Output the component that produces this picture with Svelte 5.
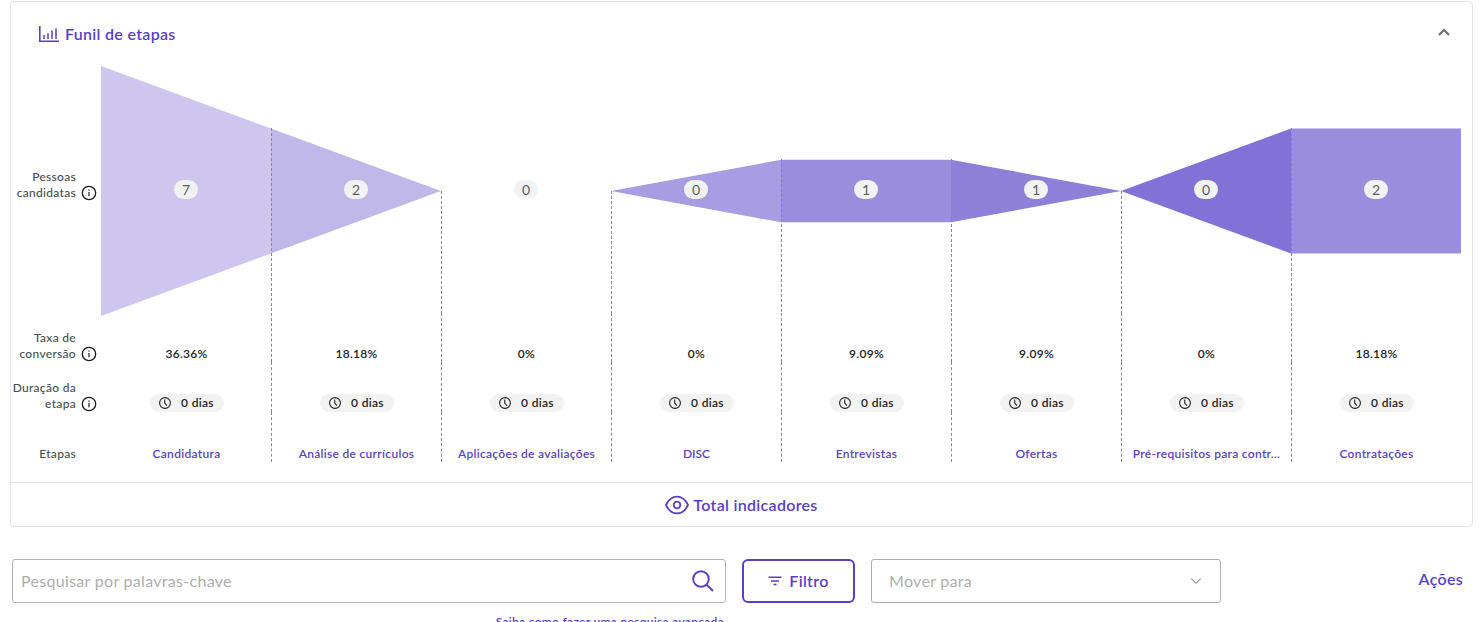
<script>
  const stages = [
    { name: 'Candidatura', people: 7, rate: '36.36%', from: 250, to: 125, color: '#cec6ef', ls: 0.3 },
    { name: 'Análise de currículos', people: 2, rate: '18.18%', from: 125, to: 0, color: '#c1b8ea', ls: 0.3 },
    { name: 'Aplicações de avaliações', people: 0, rate: '0%', from: 0, to: 0, color: '#b5aae6', ls: 0.3 },
    { name: 'DISC', people: 0, rate: '0%', from: 0, to: 62.5, color: '#a89ce2', ls: 0 },
    { name: 'Entrevistas', people: 1, rate: '9.09%', from: 62.5, to: 62.5, color: '#9b8ddd', ls: 0.3 },
    { name: 'Ofertas', people: 1, rate: '9.09%', from: 62.5, to: 0, color: '#8e7fd8', ls: 0.3 },
    { name: 'Pré-requisitos para contr...', people: 0, rate: '0%', from: 0, to: 125, color: '#8271d6', ls: 0.3 },
    { name: 'Contratações', people: 2, rate: '18.18%', from: 125, to: 125, color: '#9b8ddd', ls: 0.3 }
  ];
  const W = 170;
  const MID = 125;
  const shape = (s, i) =>
    `${i * W},${MID - s.from / 2} ${(i + 1) * W},${MID - s.to / 2} ${(i + 1) * W},${MID + s.to / 2} ${i * W},${MID + s.from / 2}`;
</script>

{#snippet info()}
  <svg class="info" width="16" height="16" viewBox="0 0 16 16" fill="none" stroke="#1c1c1c">
    <circle cx="8" cy="8" r="6.7" stroke-width="1.3" />
    <path d="M8 7v4.2M8 4.6v1.2" stroke-width="1.2" />
  </svg>
{/snippet}

<main>
  <section class="card">
    <header>
      <svg width="20" height="17" viewBox="0 0 20 17" fill="none" stroke="#5a3fc6">
        <path d="M.8 0v15.2H20" stroke-width="1.6" />
        <path d="M5 9v4M9 7.2V13M13 4.5V13M17 2.3V13" stroke-width="1.5" />
      </svg>
      <h2>Funil de etapas</h2>
      <svg class="chev" width="12" height="8" viewBox="0 0 12 8" fill="none" stroke="#6c6c6c" stroke-width="2">
        <path d="M1 7l5-5 5 5" />
      </svg>
    </header>

    <div class="chart">
      <div class="label first"><span>Pessoas<br />candidatas</span>{@render info()}</div>
      <div class="funnel">
        <svg width="1360" height="250" viewBox="0 0 1360 250">
          {#each stages as s, i}
            <polygon points={shape(s, i)} fill={s.color} />
          {/each}
          {#each stages as s, i}
            {#if i > 0}
              <path d="M{i * W + 0.5} {Math.floor(MID - s.from / 2)}V247" stroke="#8a8a8a" stroke-dasharray="3 2" />
            {/if}
          {/each}
        </svg>
        <div class="counts">
          {#each stages as s}
            <div><b>{s.people}</b></div>
          {/each}
        </div>
      </div>
    </div>

    <div class="row r1">
      <div class="label"><span>Taxa de<br />conversão</span>{@render info()}</div>
      {#each stages as s}
        <div class="cell rate">{s.rate}</div>
      {/each}
    </div>
    <div class="row">
      <div class="label"><span>Duração da<br />etapa</span>{@render info()}</div>
      {#each stages as s}
        <div class="cell">
          <div class="days">
            <svg width="12" height="12" viewBox="0 0 12 12" fill="none" stroke="#222" stroke-width="1.1">
              <circle cx="6" cy="6" r="5.4" />
              <path d="M5.7 2.6v3.5l2.2 2.5" />
            </svg>
            <span>0 dias</span>
          </div>
        </div>
      {/each}
    </div>
    <div class="row">
      <div class="label solo"><span>Etapas</span></div>
      {#each stages as s}
        <div class="cell name" style="letter-spacing:{s.ls}px">{s.name}</div>
      {/each}
    </div>

    <footer>
      <svg width="24" height="20" viewBox="0 0 24 20" fill="none" stroke="#5a3fc6" stroke-width="1.8">
        <path d="M1 10C3.6 4.6 7.4 1.6 12 1.6S20.400 4.600 23 10C20.400 15.400 16.600 18.400 12 18.400S3.600 15.400 1 10z" />
        <circle cx="12" cy="10" r="3.3" />
      </svg>
      <span>Total indicadores</span>
    </footer>
  </section>

  <section class="tools">
    <div class="search-col">
      <div class="search">
        <span>Pesquisar por palavras-chave</span>
        <svg width="22" height="22" viewBox="0 0 22 22" fill="none" stroke="#5a3fc6" stroke-width="1.9">
          <circle cx="9" cy="9" r="7.8" />
          <path d="M14.500 14.500L21 21" />
        </svg>
      </div>
      <div class="hint">Saiba como fazer uma pesquisa avançada</div>
    </div>
    <div class="filter">
      <svg width="14" height="10" viewBox="0 0 14 10" fill="none" stroke="#5a3fc6" stroke-width="1.5">
        <path d="M.5 1.200h13M3 5h8M5.500 8.600h3" />
      </svg>
      <span>Filtro</span>
    </div>
    <div class="move">
      <span>Mover para</span>
      <svg width="12" height="8" viewBox="0 0 12 8" fill="none" stroke="#a3a6a5" stroke-width="1.300">
        <path d="M1.300 1.500L6 6.200l4.700-4.700" />
      </svg>
    </div>
    <div class="actions">Ações</div>
  </section>
</main>

<style>
  :global(body) { background: #fff; overflow: hidden; }
  main {
    box-sizing: border-box;
    width: 1481px;
    height: 622px;
    overflow: hidden;
    padding: 1px 8px 0 10px;
    font-family: Lato, sans-serif;
    font-size: 12px;
    line-height: 16px;
    letter-spacing: 0.3px;
    color: #222;
  }
  .card { box-sizing: border-box; height: 526px; border: 1px solid #e4e4e4; border-radius: 4px; }
  header { display: flex; align-items: center; height: 64px; padding: 0 22px 0 28px; box-sizing: border-box; }
  header svg:first-child { margin-bottom: -1px; }
  h2 { margin: 0 0 0 6px; font-size: 16px; line-height: 22px; font-weight: 600; color: #5a3fc6; letter-spacing: 0.3px; }
  .chev { margin: 0 0 4px auto; }
  .chart { display: flex; height: 247px; }
  .label {
    box-sizing: border-box;
    width: 90px;
    flex: none;
    display: flex;
    justify-content: flex-end;
    align-items: flex-end;
    gap: 5px;
    padding-right: 4px;
    text-align: right;
    font-weight: 500;
    color: #44514f;
    white-space: nowrap;
  }
  .label.first { align-items: flex-start; padding-top: 103px; }
  .label.first .info { margin-top: 16px; }
  .label.solo { padding-right: 25px; }
  .info { flex: none; }
  .funnel { display: grid; width: 1360px; height: 250px; }
  .funnel > * { grid-area: 1 / 1; }
  .counts { display: grid; grid-template-columns: repeat(8, 170px); align-items: center; justify-items: center; margin-top: -2px; height: 250px; }
  b {
    display: block;
    width: 24px;
    height: 19px;
    border-radius: 10px;
    background: #f2f2f2;
    color: #566266;
    font-weight: 400;
    font-size: 14px;
    line-height: 19px;
    letter-spacing: 0;
    text-align: center;
  }
  .row { display: flex; height: 50px; }
  .r1 { height: 49px; }
  .cell {
    box-sizing: border-box;
    width: 170px;
    display: flex;
    align-items: flex-end;
    justify-content: center;
    border-left: 1px dashed #8a8a8a;
    white-space: nowrap;
    font-weight: 600;
  }
  .label + .cell { border-left-color: transparent; }
  .days { display: flex; align-items: center; justify-content: center; gap: 10px; width: 74px; height: 18px; border-radius: 9px; background: #f2f2f2; }
  .name { color: #5a3fc6; }
  footer {
    display: flex;
    align-items: center;
    justify-content: center;
    gap: 4px;
    height: 43px;
    margin-top: 20px;
    border-top: 1px solid #e4e4e4;
    font-size: 16px;
    line-height: 22px;
    font-weight: 600;
    color: #5a3fc6;
  }
  .tools { display: flex; padding: 32px 10px 0 2px; font-size: 16px; line-height: 22px; }
  .search-col { width: 714px; }
  .search, .filter, .move { box-sizing: border-box; height: 44px; display: flex; align-items: center; border: 1px solid #b0b6b5; border-radius: 3px; color: #adafad; }
  .search { justify-content: space-between; padding: 0 11px 0 8px; }
  .hint { margin-top: 11px; text-align: right; padding-right: 2px; font-size: 12px; line-height: 16px; font-weight: 600; color: #5a3fc6; }
  .filter { width: 113px; margin-left: 16px; border: 2px solid #5a3fc6; border-radius: 6px; color: #5a3fc6; font-weight: 600; justify-content: center; gap: 7px; }
  .move { width: 350px; margin-left: 16px; padding: 0 18px 0 17px; justify-content: space-between; border-color: #adadad; }
  .actions { margin: 9px 0 0 auto; font-weight: 600; color: #5a3fc6; }
</style>
